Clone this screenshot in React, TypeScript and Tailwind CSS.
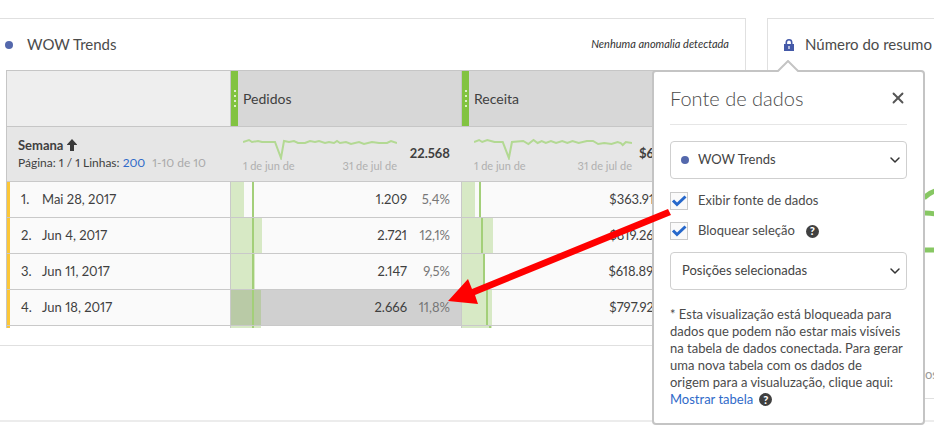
import React from "react";
import { ChevronDown, X } from "lucide-react";

type Row = {
  n: number;
  date: string;
  orders: string;
  pct: string;
  bar: number;
  line: number;
  revenue: string;
  revenuePct: string;
  revenueBar: number;
  revenueLine: number;
  selected?: boolean;
};

const rows: Row[] = [
  { n: 1, date: "Mai 28, 2017", orders: "1.209", pct: "5,4%", bar: 13, line: 21, revenue: "$363.917", revenuePct: "5,5%", revenueBar: 13, revenueLine: 17 },
  { n: 2, date: "Jun 4, 2017", orders: "2.721", pct: "12,1%", bar: 31, line: 21, revenue: "$819.266", revenuePct: "12,3%", revenueBar: 31, revenueLine: 19 },
  { n: 3, date: "Jun 11, 2017", orders: "2.147", pct: "9,5%", bar: 24, line: 21, revenue: "$618.898", revenuePct: "9,3%", revenueBar: 23, revenueLine: 21 },
  { n: 4, date: "Jun 18, 2017", orders: "2.666", pct: "11,8%", bar: 30, line: 21, revenue: "$797.925", revenuePct: "12,0%", revenueBar: 30, revenueLine: 24, selected: true },
];

function Dot() {
  return <span className="size-2 shrink-0 rounded-full bg-[#5468ac]" />;
}

function Help() {
  return (
    <button type="button" aria-label="Ajuda" className="flex size-[13px] items-center justify-center rounded-full bg-[#404040] text-[11px] leading-3 font-black text-white">
      ?
    </button>
  );
}

function ColumnHead({ label }: { label: string }) {
  return (
    <th className="border-b border-l border-[#c6c6c6] bg-[#d7d7d7] p-0 text-left font-normal">
      <div className="flex h-full items-center gap-[5px]">
        <span className="flex h-full w-[7px] flex-col items-center justify-center gap-[3px] bg-[#82c341]">
          <i className="size-[2px] bg-[#dcf0c8]" />
          <i className="size-[2px] bg-[#dcf0c8]" />
          <i className="size-[2px] bg-[#dcf0c8]" />
          <i className="size-[2px] bg-[#dcf0c8]" />
        </span>
        <span className="text-sm">{label}</span>
      </div>
    </th>
  );
}

function Trend({ points, total, width }: { points: string; total: string; width: string }) {
  return (
    <td className="border-b border-[#c9c9c9] bg-[#e6e6e6] p-0 pr-[11px] pl-[13px]">
      <div className="flex items-center justify-between">
        <div className={width}>
          <svg viewBox="0 -2 154 24" preserveAspectRatio="none" className="block h-6 w-full" fill="none" stroke="#b3d993" strokeWidth="2">
            <polyline points={points} />
          </svg>
          <div className="flex justify-between text-[11px] leading-3 text-[#b0b0b0]">
            <span>1 de jun de</span>
            <span>31 de jul de</span>
          </div>
        </div>
        <b className="text-[13px]">{total}</b>
      </div>
    </td>
  );
}

function Metric({ value, pct, bar, line, selected }: { value: string; pct: string; bar: number; line: number; selected?: boolean }) {
  return (
    <td className={"border-b border-l border-[#c9c9c9] p-0 " + (selected ? "bg-[#d0d0d0]" : "bg-[#fafafa]")}>
      <div className="relative flex h-full items-center justify-end pr-[11px]">
        <span className={"absolute inset-y-0 left-0 " + (selected ? "bg-[#b9caa6]" : "bg-[#d7e9c5]")} style={{ width: bar }} />
        <span className="absolute inset-y-0 w-[2px] bg-[#a3cf79]" style={{ left: line }} />
        <span>{value}</span>
        <span className="w-[43px] text-right text-[#777]">{pct}</span>
      </div>
    </td>
  );
}

function SourceTable() {
  return (
    <div className="ml-[6px] h-[258px] overflow-hidden border-t border-l border-[#c6c6c6]">
      <table className="h-px w-full table-fixed border-separate border-spacing-0 text-[13px] text-[#3f3f3f] proportional-nums">
        <colgroup>
          <col className="w-[223px]" />
          <col className="w-[231px]" />
          <col />
        </colgroup>
        <thead>
          <tr className="h-14">
            <th className="border-b border-[#c6c6c6] bg-[#eee] p-0" aria-label="Dimensão" />
            <ColumnHead label="Pedidos" />
            <ColumnHead label="Receita" />
          </tr>
        </thead>
        <tbody>
          <tr className="h-[55px]">
            <td className="border-b border-[#c9c9c9] bg-[#e6e6e6] p-0 pl-[11px] leading-[18px]">
              <div className="flex items-center gap-1">
                <b>Semana</b>
                <svg viewBox="0 0 10 12" className="h-3 w-[10px]" fill="#3a3a3a">
                  <path d="M5 0 10.500 6H7v6H3V6H-.5z" />
                </svg>
              </div>
              <div className="text-xs leading-[18px] whitespace-nowrap">
                Página: 1 / 1 Linhas: <a href="#linhas" className="text-[#2f6ac9]">200</a>
                <span className="ml-[7px] text-[#aaa]">1-10 de 10</span>
              </div>
            </td>
            <Trend
              width="w-[154px]"
              total="22.568"
              points="0,4 6,2 9,4 15,3 19,4 28,4 32,4 38,20 41,3 46,4 51,3 55,5 62,5 67,3 72,4 76,3 82,5 86,4 91,5 94,3 97,5 103,4 108,6 116,4 121,6 129,4 136,5 144,5 148,3 154,5"
            />
            <Trend
              width="w-[158px]"
              total="$6.652.401"
              points="0,4 5,2 8,4 13,2 20,4 28,4 34,20 37,4 48,3 53,6 58,2 62,5 66,3 70,5 75,3 80,5 86,3 91,5 96,3 102,5 110,3 116,3 121,6 127,5 134,6 140,4 143,5 145,7 148,4 154,5"
            />
          </tr>
          {rows.map((r) => (
            <tr key={r.n} className="h-9">
              <td className="border-b border-[#c9c9c9] bg-[#fafafa] p-0">
                <div className="flex h-full items-center border-l-[3px] border-[#fcc738] pl-[11px]">
                  <span className="w-[21px]">{r.n}.</span>
                  <span>{r.date}</span>
                </div>
              </td>
              <Metric value={r.orders} pct={r.pct} bar={r.bar} line={r.line} selected={r.selected} />
              <Metric value={r.revenue} pct={r.revenuePct} bar={r.revenueBar} line={r.revenueLine} />
            </tr>
          ))}
          <tr className="h-9">
            <td className="p-0">
              <div className="h-full border-l-[3px] border-[#fcc738]" />
            </td>
            <td className="border-l border-[#c9c9c9] p-0">
              <div className="relative h-full">
                <span className="absolute inset-y-0 left-0 w-[30px] bg-[#d7e9c5]" />
                <span className="absolute inset-y-0 left-[21px] w-[2px] bg-[#a3cf79]" />
              </div>
            </td>
            <td className="border-l border-[#c9c9c9] p-0">
              <div className="relative h-full">
                <span className="absolute inset-y-0 left-0 w-[30px] bg-[#d7e9c5]" />
                <span className="absolute inset-y-0 left-[27px] w-[2px] bg-[#a3cf79]" />
              </div>
            </td>
          </tr>
        </tbody>
      </table>
    </div>
  );
}

function Check({ id, label }: { id: string; label: string }) {
  return (
    <span className="flex h-[18px] items-center gap-[10px]">
      <span className="relative flex size-[18px]">
        <input id={id} type="checkbox" defaultChecked className="size-[18px] appearance-none border border-[#cacaca] bg-[#fafafa]" />
        <svg viewBox="0 0 18 18" className="pointer-events-none absolute inset-0" fill="none" stroke="#2668cb" strokeWidth="3">
          <path d="M3 8.5 7 12.5 15.5 4.5" />
        </svg>
      </span>
      <label htmlFor={id}>{label}</label>
    </span>
  );
}

function Picker({ label, value, dot }: { label: string; value: string; dot?: boolean }) {
  return (
    <div className="relative flex items-center">
      <select
        aria-label={label}
        className={"h-[38px] w-full appearance-none rounded-[4px] border border-[#cfcfcf] bg-white text-[13px] text-[#444] " + (dot ? "pl-[27px]" : "pl-[11px]")}
      >
        <option>{value}</option>
      </select>
      {dot && (
        <span className="pointer-events-none absolute left-[11px]">
          <span className="block size-2 rounded-full bg-[#5468ac]" />
        </span>
      )}
      <ChevronDown className="pointer-events-none absolute right-1 size-4 text-[#333]" strokeWidth={2.2} />
    </div>
  );
}

function SourcePopover() {
  return (
    <section
      aria-label="Fonte de dados"
      className="absolute top-[51px] -left-[116px] z-10 w-[273px] rounded-[4px] border-2 border-[#c4c4c4] bg-white px-4 pb-[15px] text-[13px] text-[#4b4b4b]"
    >
      <svg viewBox="0 0 24 12" className="absolute -top-3 left-[122px] h-3 w-6" fill="#fff" stroke="#c4c4c4" strokeWidth="2">
        <path d="M1 12 12 1 23 12" />
      </svg>
      <header className="flex h-[53px] items-center justify-between border-b border-[#e6e6e6]">
        <h2 className="text-xl font-light">Fonte de dados</h2>
        <button type="button" aria-label="Fechar">
          <X className="size-[18px] text-[#555]" strokeWidth={2.5} />
        </button>
      </header>
      <div className="mt-4">
        <Picker label="Fonte" value="WOW Trends" dot />
      </div>
      <div className="mt-[13px] mb-3 flex flex-col gap-3">
        <Check id="show" label="Exibir fonte de dados" />
        <div className="flex items-center gap-[11px]">
          <Check id="lock" label="Bloquear seleção" />
          <Help />
        </div>
      </div>
      <Picker label="Tipo" value="Posições selecionadas" />
      <p className="mt-4 pr-1 leading-[17px]">
        * Esta visualização está bloqueada para dados que podem não estar mais visíveis na tabela de dados conectada. Para gerar uma nova tabela com os dados de origem para a visualuzação, clique aqui:
      </p>
      <div className="flex items-center gap-[6px] leading-[17px]">
        <a href="#tabela" className="text-[#2f6ac9]">Mostrar tabela</a>
        <Help />
      </div>
    </section>
  );
}

export default function App() {
  return (
    <main className="overflow-hidden bg-white pb-[22px] font-[Lato,'Noto_Sans',sans-serif] text-[#4b4b4b]">
      <div className="relative flex h-[422px] items-start gap-[21px] border-b-2 border-[#ececec] pt-[18px]">
        <section className="h-[328px] min-w-0 flex-1 border-y border-r border-[#e0e0e0]">
          <header className="flex h-[51px] items-center justify-between pr-4 pl-[5px]">
            <h2 className="flex items-center gap-[14px] text-[15px]">
              <Dot />
              WOW Trends
            </h2>
            <em className="text-[11px] text-[#333]">Nenhuma anomalia detectada</em>
          </header>
          <div className="pr-[30px]">
            <SourceTable />
          </div>
        </section>
        <section className="relative h-[381px] w-[167px] border-y border-l border-[#e0e0e0]">
          <header className="flex h-[51px] items-center gap-[11px] pl-4 whitespace-nowrap">
            <svg viewBox="0 0 10 12" className="h-3 w-[10px] shrink-0">
              <path d="M2.3 6V3.5a2.7 2.7 0 0 1 5.4 0V6" fill="none" stroke="#4459a8" strokeWidth="1.6" />
              <path d="M0 5h10v7H0z" fill="#4459a8" />
              <path d="M4.4 7h1.2v3H4.4z" fill="#fff" />
            </svg>
            <h2 className="text-[15px]">Número do resumo</h2>
          </header>
          <div className="flex flex-col gap-[107px] overflow-hidden pt-[116px] pl-[157px]">
            <svg aria-hidden="true" viewBox="0 0 9 72" className="h-[72px] w-[9px]" fill="none" stroke="#87c763" strokeWidth="5">
              <path d="M-1 12Q4 7 10 5M-1 27Q6 27 10 28M-1 64H10" />
            </svg>
            <span className="text-[13px] leading-[18px] text-[#999]">os</span>
          </div>
          <SourcePopover />
        </section>
        <svg
          aria-hidden="true"
          viewBox="0 0 224 94"
          className="pointer-events-none absolute top-[210px] right-[262px] z-20 h-[94px] w-[224px] overflow-visible"
          fill="#f00"
        >
          <path d="M220 -1 223 5 27 85 30 94 0 91 20 69 24 79z" />
        </svg>
      </div>
    </main>
  );
}
